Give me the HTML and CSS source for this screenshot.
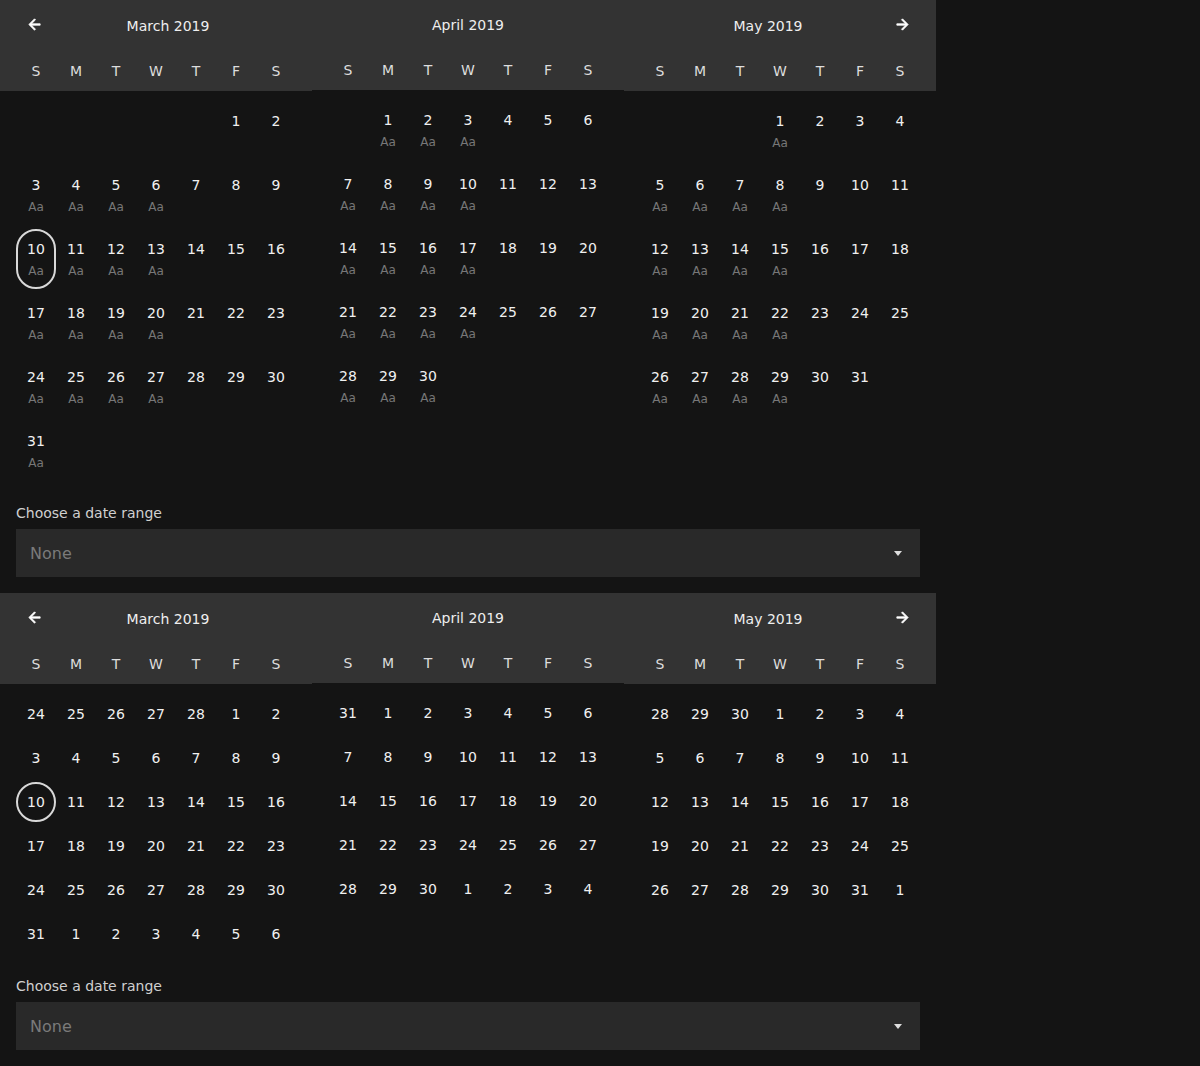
FILE: index.html
```html
<!DOCTYPE html>
<html>
<head>
<meta charset="utf-8">
<link rel="stylesheet" href="styles.css">
</head>
<body>
<div id="app"></div>
<script src="app.js"></script>
</body>
</html>
```

FILE: styles.css
```css
* { box-sizing: border-box; }
html, body { margin: 0; padding: 0; background: #141414; }
body { font-family: "DejaVu Sans", sans-serif; color: #eee; font-size: 14px; }

.picker { display: flex; width: 936px; }
.month { width: 312px; }
.month-head { background: #333; }
.title-row { height: 51px; display: flex; align-items: center; padding: 0 16px; }
.title-row.short { height: 50px; }
.nav { width: 24px; height: 24px; display: flex; align-items: center; justify-content: center; flex: none; margin-bottom: 3px; }
.nav.prev { margin-left: 6px; margin-right: -6px; }
.nav.next { margin-right: 6px; margin-left: -6px; }
.nav svg { width: 17px; height: 17px; display: block; fill: #fff; stroke: #fff; stroke-width: 1.1; stroke-linejoin: miter; }
.title { flex: 1; text-align: center; line-height: 16px; color: #eee; }
.weekdays { display: grid; grid-template-columns: repeat(7, 40px); padding: 0 16px; height: 40px; align-items: center; color: #ddd; }
.weekdays span { text-align: center; line-height: 16px; }

.grid { display: grid; grid-template-columns: repeat(7, 40px); row-gap: 4px; padding: 10px 16px 0; }
.grid.tall { grid-auto-rows: 60px; }
.grid.compact { grid-auto-rows: 40px; }
.grid.tall.rows6 { height: 390px; }
.grid.compact.rows6 { height: 270px; }

.day { display: flex; flex-direction: column; align-items: center; color: #f0f0f0; border-radius: 20px; border: 2px solid transparent; }
.grid.tall .day { padding-top: 10px; }
.grid.compact .day { justify-content: center; }
.day .num { line-height: 16px; }
.day .sub { font-size: 12px; line-height: 14px; margin-top: 7px; color: #777; }
.day.selected { border-color: #d8d8d8; }
.grid.compact .day.selected { border-radius: 50%; }

.field { width: 904px; margin: 24px 16px 16px; }
.field-label { display: block; line-height: 16px; margin-bottom: 8px; color: #d0d0d0; }
.select { height: 48px; background: #292929; display: flex; align-items: center; padding: 0 18px 0 14px; font-size: 16px; color: #7a7a7a; }
.select .value { flex: 1; }
.caret { width: 0; height: 0; border-left: 4px solid transparent; border-right: 4px solid transparent; border-top: 5px solid #ddd; }
```

FILE: app.js
```js
(function () {
  var months = [
    { name: 'March 2019', start: 5, days: 31, prevDays: 28 },
    { name: 'April 2019', start: 1, days: 30, prevDays: 31 },
    { name: 'May 2019', start: 3, days: 31, prevDays: 30 }
  ];
  var wd = ['S','M','T','W','T','F','S'];
  var arrowBack = '<svg viewBox="0 0 24 24"><path d="M20 11H7.83l5.59-5.59L12 4l-8 8 8 8 1.41-1.41L7.83 13H20v-2z"/></svg>';
  var arrowFwd = '<svg viewBox="0 0 24 24"><path d="M12 4l-1.41 1.41L16.17 11H4v2h12.17l-5.58 5.59L12 20l8-8z"/></svg>';

  function monthHtml(m, idx, mode) {
    var h = '<div class="month"><div class="month-head">';
    h += '<div class="title-row' + (idx === 1 ? ' short' : '') + '">';
    if (idx === 0) h += '<div class="nav prev">' + arrowBack + '</div>';
    h += '<div class="title">' + m.name + '</div>';
    if (idx === 2) h += '<div class="nav next">' + arrowFwd + '</div>';
    h += '</div><div class="weekdays">';
    wd.forEach(function (d) { h += '<span>' + d + '</span>'; });
    h += '</div></div>';
    h += '<div class="grid ' + mode + ' rows6">';
    var cells = [];
    var i;
    for (i = 0; i < m.start; i++) {
      cells.push({ num: m.prevDays - m.start + 1 + i, out: true });
    }
    for (i = 1; i <= m.days; i++) cells.push({ num: i, out: false });
    if (mode === 'compact') {
      var n = 1;
      while (cells.length % 7 !== 0) cells.push({ num: n++, out: true });
    }
    cells.forEach(function (c, k) {
      var dow = k % 7;
      var sel = (idx === 0 && !c.out && c.num === 10);
      if (mode === 'tall') {
        if (c.out) { h += '<div class="empty"></div>'; return; }
        h += '<div class="day' + (sel ? ' selected' : '') + '"><span class="num">' + c.num + '</span>';
        if (dow <= 3) h += '<span class="sub">Aa</span>';
        h += '</div>';
      } else {
        h += '<div class="day' + (sel ? ' selected' : '') + '"><span class="num">' + c.num + '</span></div>';
      }
    });
    h += '</div></div>';
    return h;
  }

  function section(mode) {
    var h = '<div class="picker">';
    months.forEach(function (m, i) { h += monthHtml(m, i, mode); });
    h += '</div>';
    h += '<div class="field"><label class="field-label">Choose a date range</label>';
    h += '<div class="select"><span class="value">None</span><span class="caret"></span></div></div>';
    return h;
  }

  document.getElementById('app').innerHTML = section('tall') + section('compact');
})();
```
